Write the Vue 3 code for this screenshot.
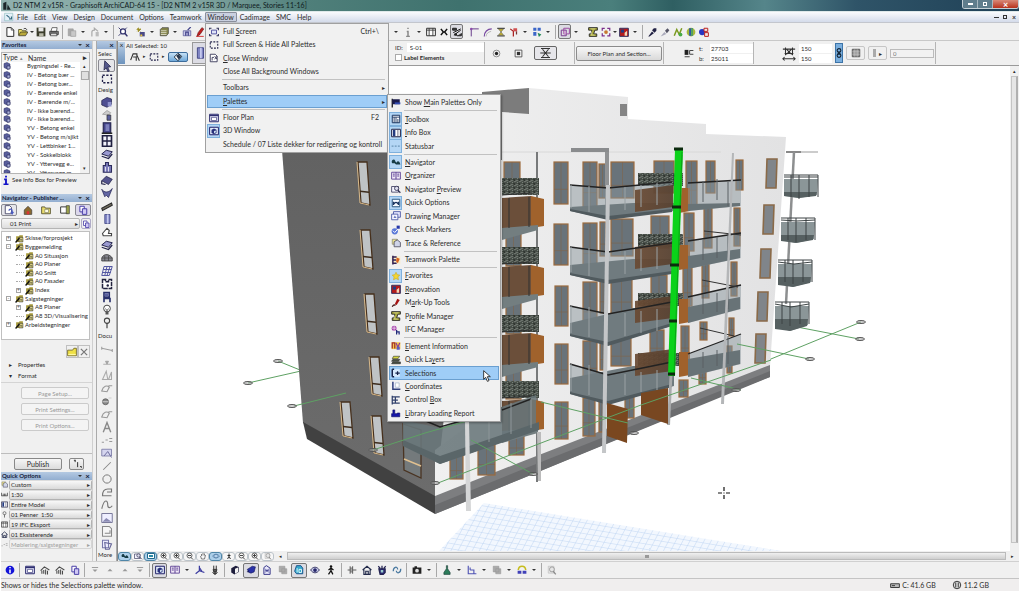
<script setup>
const icons = {
  page: '<path d="M3 1h7l4 4v10H3z" fill="#fff" stroke="#222" stroke-width="1.5"/><path d="M10 1v4h4" fill="none" stroke="#222"/>',
  open: '<path d="M1 13V4h5l1 2h6v3" fill="#f4e36a" stroke="#3a3a10" stroke-width="1.2"/><path d="M1 14l3-6h12l-4 6z" fill="#b9a93a" stroke="#222"/><path d="M9 3c3-2 5 0 5 2" fill="none" stroke="#222" stroke-width="1.3"/>',
  save: '<path d="M1 1h14v14H1z" fill="#3b3d2c"/><path d="M4 1h8v6H4z" fill="#e8e8e8"/><path d="M5 10h7v5H5z" fill="#b8b8a8"/>',
  print: '<path d="M5 1h8l-1 6H3z" fill="#fff" stroke="#222"/><path d="M1 7h14v5H1z" fill="#777" stroke="#222"/><path d="M3 10h9l1 4H2z" fill="#ddd" stroke="#222"/>',
  paste: '<path d="M2 3h8v11H2z" fill="#aaa" stroke="#999"/><path d="M6 6h8v9H6z" fill="#c8c8c8" stroke="#999"/>',
  undo: '<path d="M3 15V8q0-3 4-3V2l6 5" fill="none" stroke="#aaa" stroke-width="2"/><path d="M9 8h5v7H9z" fill="#bbb"/>',
  find: '<path d="M1 1l4 4M1 14l4-4M14 1l-3 3" stroke="#447" stroke-width="1.6"/><circle cx="8" cy="7" r="4" fill="#fff" stroke="#33336e" stroke-width="2"/><path d="M11 10l4 5" stroke="#33336e" stroke-width="2.4"/>',
  star: '<path d="M1 4h7M4 1v7M2 2l5 5M7 2L2 7" stroke="#9a8b20" stroke-width="1.4"/><path d="M6 8h8v7H6z" fill="#4a4a86"/><path d="M7 12h3v3H7z" fill="#e8c840"/>',
  layers: '<path d="M2 4l3-3h10v9l-3 4H2z" fill="#85854a" stroke="#333"/><path d="M3 6h9M3 9h9M3 12h9" stroke="#ecece0" stroke-width="1.2"/>',
  pick: '<path d="M2 6h12v8H2z" fill="#c9c9ea" stroke="#44448a"/><path d="M6 14V8h4v6M9 5l5-5" fill="none" stroke="#44448a" stroke-width="2"/>',
  pencil: '<path d="M3 15l2-6 6-8 3 2-6 9z" fill="#c22020" stroke="#611"/><path d="M2 15h12" stroke="#c22" stroke-width="1.4"/>',
  info: '<path d="M8 1v2M8 6v9M5 15h6M6 7h2" stroke="#888" stroke-width="2.4"/>',
  sheet: '<path d="M1 2h14v12H1z" fill="#fff" stroke="#333" stroke-width="1.6"/><path d="M1 5h14M5 2v12M11 2v12" stroke="#333" stroke-width="1.4"/>',
  cross: '<path d="M3 3l4 5-4 5M13 3L9 8l4 5M6 8h4" fill="none" stroke="#111" stroke-width="2.4"/>',
  snap: '<path d="M1 2h6v3H1zM2 9l12-6M3 13l11-8M8 14h7v-4" fill="#444" stroke="#222" stroke-width="1.6"/><path d="M4 10h4v4H4z" fill="#222"/>',
  corner: '<path d="M2 15V3h12" fill="none" stroke="#6a3f8c" stroke-width="1.6"/><circle cx="2" cy="3" r="2" fill="#8a4aa8"/>',
  curve: '<path d="M2 15C2 8 7 3 14 3" fill="none" stroke="#7748a0" stroke-width="1.8"/><path d="M5 15c0-4 3-7 8-8" fill="none" stroke="#999"/>',
  glass: '<path d="M2 2h12M2 14h12" stroke="#444" stroke-width="2"/><path d="M4 3h8l-4 5zM8 8l4 5H4z" fill="#c8b430" stroke="#665"/>',
  flag: '<path d="M2 3l5 4v8" fill="none" stroke="#a22" stroke-width="2"/><path d="M7 2h6v5H7z" fill="#d05050"/><path d="M12 7v5" stroke="#733" stroke-width="2"/>',
  blocks: '<path d="M2 1h5v5H2zM9 1h5v5H9zM2 8h5v6H2z" fill="#3b66c8"/><path d="M9 9l6 3-4 4z" fill="#285"/>',
  frame: '<path d="M2 5h8v9H2z" fill="none" stroke="#7b3d91" stroke-width="1.6"/><path d="M6 2h9v9H6z" fill="none" stroke="#9b4fa1" stroke-width="1.6"/><path d="M6 7h4v4H6z" fill="#cf9ad0"/>',
  profile: '<path d="M1 1h14v4h-4l-2 6h5v4H2v-4h3l1-6H1z" fill="#a9a93a" stroke="#222" stroke-width="1.4"/><path d="M4 3h8M6 7l-1 6h6" fill="none" stroke="#ececb0"/>',
  target: '<path d="M2 6V2h4M10 2h4v4M14 10v4h-4M6 14H2v-4" fill="none" stroke="#7a2f8a" stroke-width="2"/><circle cx="8" cy="8" r="3" fill="#c77830"/>',
  reno: '<path d="M1 2h14v13H1z" fill="#b51b1b" stroke="#303060" stroke-width="1.5"/><path d="M3 4h5v5H3z" fill="#223a80"/><path d="M9 9l4-3v8H9z" fill="#f3d7b8"/>',
  dropper: '<path d="M2 15l6-8 3 3-7 5zM8 5l3-3h4v4l-3 3z" fill="#222244"/>',
  syringe: '<path d="M1 15l6-7 3 3-6 3z" fill="#aab"/><path d="M8 6l4-4 3 3-4 5z" fill="#556"/>',
  wand: '<path d="M2 14L6 4l4 8 4-10" fill="none" stroke="#7a9a20" stroke-width="2.4"/><circle cx="12" cy="12" r="3" fill="#4a4"/>',
  globe: '<circle cx="8" cy="8" r="7" fill="#a8b83a"/><path d="M5 2h6v12H5z" fill="#2f54a8"/><path d="M8 2h3v12H8z" fill="#58a85a"/>',
  duo: '<circle cx="5" cy="8" r="5" fill="#2735c2"/><path d="M8 2h6v5H8zM9 9h6v6H9z" fill="#f4e6e0" stroke="#b22" stroke-width="1.6"/>',
  screen: '<path d="M1 4V2h3M12 2h3v3M15 11v3h-3M4 14H1v-3" fill="none" stroke="#33335c" stroke-width="1.8"/><path d="M4 5h8v6H4z" fill="#dfe4f8" stroke="#5a5aa5" stroke-width="1.6"/>',
  marquee: '<path d="M2 3h12v10H2z" fill="none" stroke="#22224a" stroke-width="1.7" stroke-dasharray="3 2"/>',
  closewin: '<path d="M2 2h8l3 3v9H2z" fill="#fff" stroke="#335" stroke-width="1.4"/><path d="M5 12V7h3M9 5l4 5M13 5l-4 5" fill="none" stroke="#335" stroke-width="1.4"/>',
  goto: '<path d="M2 1h7l3 3v10H2z" fill="#fff" stroke="#446" stroke-width="1.4"/><path d="M8 9c0-3 5-3 5 0v4M11 11l2 3 2-3" fill="none" stroke="#4a5ac0" stroke-width="2"/>',
  plan: '<path d="M1 2h14v12H1z" fill="#dfe0f4" stroke="#2e2e70" stroke-width="1.6"/><path d="M1 4h14" stroke="#2e2e70" stroke-width="2"/><path d="M4 7h8v5H4z" fill="#fff" stroke="#2e2e70"/>',
  cube: '<path d="M1 2h14v12H1z" fill="#e5eefa" stroke="#20206a" stroke-width="1.6"/><path d="M4 6l4-2 4 2v5l-4 2-4-2z" fill="#28307c"/><path d="M8 8l3-1v3l-3 2z" fill="#cde"/>',
  flagdark: '<path d="M2 1v14" stroke="#111" stroke-width="2"/><path d="M2 2h12v8H2z" fill="#1b1b4a"/><path d="M6 7h9v3H6z" fill="#334bb0"/>',
  toolbox: '<path d="M2 2h12v12H2z" fill="#fff" stroke="#1b3560" stroke-width="1.6"/><path d="M2 5h12M5 5v9M8 5v9M11 8v6" stroke="#1b3560" stroke-width="1.4"/>',
  infobox: '<path d="M1 2h14v12H1z" fill="#fff" stroke="#224" stroke-width="1.6"/><path d="M3 3h4v10H3z" fill="#223a80"/><path d="M11 3v10" stroke="#224"/>',
  status: '<path d="M1 8h3M6 8h3M11 8h3" stroke="#6c96b8" stroke-width="2"/>',
  navi: '<path d="M1 8c1-5 5-5 6-1l2 2c1-4 5-3 6 3H8l-2-2H2z" fill="#173c46"/>',
  organizer: '<path d="M1 2h14v11H1z" fill="#f2eaf8" stroke="#5a3f92" stroke-width="1.4"/><path d="M8 2v11M3 5h3M3 8h3M10 5h3M10 8h3" stroke="#5a3f92" stroke-width="1.6"/>',
  preview: '<path d="M1 4h11v9H1z" fill="#f4f4ff" stroke="#446" stroke-width="1.4"/><circle cx="9" cy="7" r="3.4" fill="#dde" stroke="#335" stroke-width="1.4"/><path d="M11 10l4 4" stroke="#335" stroke-width="2"/>',
  quick: '<path d="M2 2h12v12H2z" fill="#f6fbff" stroke="#23507a" stroke-width="1.5"/><path d="M4 6v5M12 6v5M4 10c3-4 5-4 8 0" fill="none" stroke="#1b3560" stroke-width="2"/>',
  drawing: '<path d="M4 1h11v9H4z" fill="#e6e8ff" stroke="#4a57a5" stroke-width="1.4"/><path d="M1 5h10v9H1z" fill="#f7f7ff" stroke="#4a57a5" stroke-width="1.4"/><path d="M4 11l2-4 3 4z" fill="#6a7ac0"/>',
  check: '<circle cx="6" cy="10" r="5" fill="#5a78d8"/><path d="M3 9l3 3 6-7" stroke="#fff" stroke-width="1.6" fill="none"/><path d="M9 1h5v5H9z" fill="#2737a8"/>',
  trace: '<path d="M2 2h8v8H2z" fill="#e9df8a" stroke="#776"/><path d="M5 6l5-3 5 4v7H5z" fill="#cfd4e8" stroke="#556" stroke-width="1.4"/>',
  team: '<path d="M1 2h14v12H1z" fill="#f9edc8"/><path d="M3 1v14M3 3h6M3 8h5M3 13h6" stroke="#332255" stroke-width="2.4"/><path d="M9 4l5 2-3 7-3-3z" fill="#d9631e"/>',
  fav: '<path d="M8 2l2 4 4 .5-3 3 1 4.500-4-2-4 2 1-4.500-3-3L6 6z" fill="#f3d534" stroke="#c8a820"/>',
  markup: '<path d="M6 10l4-9 4 2-5 8z" fill="#a51212"/><path d="M2 14c2-4 4-3 5-2" fill="none" stroke="#401010" stroke-width="2"/>',
  ifc: '<circle cx="5" cy="5" r="4" fill="#a23aa8"/><path d="M1 5h8M5 1v8" stroke="#fff"/><path d="M9 8v7M9 11h4v4" fill="none" stroke="#222a7a" stroke-width="2"/>',
  element: '<path d="M1 2h14v11H1z" fill="#f6c84a"/><path d="M2 2v10M2 3h4v9" stroke="#a03030" stroke-width="2" fill="none"/><path d="M8 3l3 7 3-7" stroke="#8a3a9a" stroke-width="2" fill="none"/><path d="M9 9h5v5H9z" fill="#5a5ac0"/>',
  qlayers: '<path d="M4 2h10l-3 4H2z" fill="#d7d83c" stroke="#333"/><path d="M3 7h11l-2 3H1zM3 11h12v3H1z" fill="#50584a" stroke="#222"/>',
  select: '<path d="M1 2h13v12H1z" fill="#d8eafc"/><path d="M2 2v12M2 2h3M2 14h3" stroke="#17244a" stroke-width="2.4"/><path d="M7 8h7M10.500 5v6" stroke="#17244a" stroke-width="2"/>',
  coord: '<path d="M2 2h11v10H2z" fill="#eef"/><path d="M3 1v12h12" fill="none" stroke="#30407c" stroke-width="2.4"/><path d="M7 3h6v7H7z" fill="#fff" stroke="#9ab"/>',
  control: '<path d="M2 1v14M2 3h12M2 8h9M2 13h12M7 3v10" stroke="#30406c" stroke-width="2"/>',
  library: '<path d="M1 14V9h2V3h3v6h4V8h4v6z" fill="#1717a8" stroke="#0c0c66"/>',
  house: '<path d="M2 8l6-6 6 6v7H2z" fill="#8a6a30" stroke="#333"/><path d="M6 15v-5h4v5z" fill="#d33"/>',
  folder: '<path d="M1 13V3h5l1 2h8v9H1z" fill="#e9dc6c" stroke="#4a4520" stroke-width="1.3"/><path d="M6 7h6v5H6z" fill="#fffde0" stroke="#776"/>',
  newfolder: '<path d="M1 14V5h8l2-3h4v12z" fill="#efe045" stroke="#6a6020" stroke-width="1.3"/><path d="M2 12h12" stroke="#fff9a0" stroke-width="2"/>',
  layout: '<path d="M1 3h12v10H1z" fill="#fff" stroke="#333" stroke-width="1.5"/><path d="M10 1h5v13h-5z" fill="#9aa04a" stroke="#333"/>',
  pub: '<path d="M3 2h7v9H3z" fill="#fff" stroke="#4a3fa8" stroke-width="1.6"/><path d="M7 6h7v9H7z" fill="#cfc8f4" stroke="#4a3fa8" stroke-width="1.6"/>',
  pubset: '<path d="M2 14V4h5l1-2h6v12z" fill="#a89a3c"/><path d="M7 6h7v8H7z" fill="#fff49a" stroke="#222"/><path d="M9 13V9h3v4" fill="none" stroke="#222"/><path d="M1 15l7-8" stroke="#111" stroke-width="2.4"/>',
  favitem: '<path d="M2 3l6-2 6 3v8l-4 3-8-4z" fill="#5a5f9c" stroke="#2c2f5e"/><path d="M8 8h6v6H8z" fill="#aeb4de" stroke="#2c2f5e" stroke-width="1.4"/>',
  arrow: '<path d="M5 1l8 8-4 .5 2 5-2 1-2-5-3 3z" fill="#55588c" stroke="#222248"/>',
  wall: '<path d="M1 6l7-4 6 2v7l-6 4-7-3z" fill="#4f4f92" stroke="#26264e"/><path d="M9 8h5v6H9z" fill="#8f93cc"/>',
  pillar: '<path d="M2 7l6-5 5 3-3 3z" fill="#ccc" stroke="#999"/><path d="M8 8h5v7H8z" fill="#5a5f9c" stroke="#333"/>',
  door: '<path d="M3 1h10v14H3z" fill="#45458a" stroke="#24244e" stroke-width="1.5"/><path d="M6 3h5v9H6z" fill="#7d80bc"/><path d="M1 15h14" stroke="#222" stroke-width="2"/>',
  window: '<path d="M2 1h12v14H2z" fill="#f2f2fa" stroke="#202040" stroke-width="2.2"/><path d="M8 1v14M2 8h12" stroke="#202040" stroke-width="1.8"/>',
  beam: '<path d="M1 11L14 4l1 3-13 7z" fill="#777264" stroke="#2a2a2a" stroke-width="1.4"/>',
  column: '<path d="M5 2h7v12H5z" fill="#8186c4" stroke="#3c4080"/><path d="M8 2h2v12H8z" fill="#c5c9ee"/>',
  slab: '<path d="M1 8l6-5 8 2-5 6z" fill="#9a9ad0" stroke="#22224a" stroke-width="1.3"/><path d="M1 11l9 3 5-6" fill="none" stroke="#22224a" stroke-width="1.6"/>',
  stair: '<path d="M3 15V6h3V2h4v4h4v9z" fill="#7a7ab8" stroke="#2c2c5c" stroke-width="1.4"/><path d="M6 8v6M10 8v6" stroke="#fff"/>',
  roof: '<path d="M1 9l6-6 8 4-5 7z" fill="#54548e" stroke="#222248"/><path d="M1 9v4l5 1" fill="none" stroke="#222248" stroke-width="1.6"/>',
  shell: '<path d="M1 3c3 5 10 5 14-1l-5 12-3-3-2 2z" fill="#6266a4" stroke="#2a2a58"/>',
  sky: '<path d="M2 10l6-7 3 3-1 4h4v3H3z" fill="#fff" stroke="#444" stroke-width="1.5"/>',
  mesh: '<path d="M4 2h11l-4 12H1zM3 6h11M2 10h11M8 2L5 14M12 2L8 14" fill="none" stroke="#5054a0" stroke-width="1.3"/>',
  morph: '<path d="M1 8c3-7 11-5 14 0v4H1z" fill="#85858e" stroke="#333"/><path d="M1 8h14M5 5v7M10 5v7" stroke="#444"/>',
  zone: '<path d="M2 2h4v3h4V2h4v12H2z" fill="#fff" stroke="#22223e" stroke-width="2" stroke-dasharray="6 1"/><circle cx="9" cy="10" r="1.6" fill="#22223e"/>',
  chair: '<path d="M4 2h7v6H4zM4 8v7M4 10h8v5" fill="none" stroke="#28306c" stroke-width="2.2"/><path d="M5 3h5v4H5z" fill="#5a60a0"/>',
  lamp: '<circle cx="8" cy="6" r="4.500" fill="#fff" stroke="#444" stroke-width="1.3"/><path d="M6 10h4v4H6z" fill="#555"/><path d="M6 6l2 3 2-3" fill="none" stroke="#333"/>',
  pin: '<circle cx="8" cy="5" r="3.500" fill="#eee" stroke="#444" stroke-width="1.4"/><path d="M8 8v7" stroke="#444" stroke-width="1.6"/>',
  dim: '<path d="M1 5v4M15 8v4M1 7l14 3" stroke="#999" stroke-width="1.3"/>',
  level: '<path d="M3 11h10M8 11L6 7h4z" stroke="#999" fill="#aaa"/>',
  angle: '<path d="M2 14L7 3l2 11zM10 14l4-10v10z" fill="none" stroke="#aaa" stroke-width="1.4"/>',
  radial: '<path d="M1 12c2-7 7-8 10-5L8 13zM10 5h5" fill="none" stroke="#999" stroke-width="1.5"/>',
  ball: '<circle cx="6" cy="9" r="4" fill="#888" stroke="#555"/><path d="M10 4h4M2 9h8" stroke="#ccc" stroke-width="1.6"/>',
  textA: '<path d="M3 15L8 2l5 13M5 10h6" fill="none" stroke="#888" stroke-width="1.8"/>',
  label: '<path d="M1 11h3M6 8h3M11 6h4M11 10h4" fill="none" stroke="#999" stroke-width="1.6"/>',
  fill: '<path d="M1 3h13v9H1z" fill="#d5d5ee" stroke="#6d6d9c"/><path d="M4 12l5-6 5 8" fill="none" stroke="#6d6d9c" stroke-width="1.3"/>',
  line: '<path d="M3 13L13 3" stroke="#888" stroke-width="1.4"/>',
  circle: '<circle cx="8" cy="8" r="5.500" fill="none" stroke="#777" stroke-width="1.3"/>',
  poly: '<path d="M14 13H2c0-5 2-9 7-9h5v4H8" fill="none" stroke="#777" stroke-width="1.5"/>',
  spline: '<path d="M1 13C5-3 9 3 9 8s4 4 6 1" fill="none" stroke="#777" stroke-width="1.5"/>',
  figure: '<path d="M1 2h14v12H1z" fill="#eef" stroke="#779" stroke-width="1.3"/><path d="M2 13l5-5 7 5z" fill="#8b8bb4"/>',
  dwg: '<path d="M2 2h9l3 3v10H2z" fill="#f6f6f6" stroke="#888" stroke-width="1.4"/><path d="M5 11h7V7" fill="none" stroke="#888" stroke-width="1.4"/>',
  detail: '<path d="M2 3h8v10H2z" fill="#eef" stroke="#77a" stroke-width="1.4"/><path d="M5 6l9 2-3 7H6z" fill="none" stroke="#669" stroke-width="1.5"/>',
  i: '<circle cx="8" cy="8" r="7" fill="#1414d8"/><path d="M8 3v2M8 7v6" stroke="#fff" stroke-width="2.4"/>',
  roofs: '<path d="M1 9l6-6 8 5M3 9v5M6 8v6M9 7v8M12 9v6" fill="none" stroke="#4a4a4a" stroke-width="1.7"/>',
  down: '<path d="M3 4h10" stroke="#999" stroke-width="1.5"/><path d="M4 7h8l-4 4z" fill="#999"/>',
  up: '<path d="M4 10h8L8 6z" fill="#999"/>',
  axes: '<path d="M7 1v8l-6 5M7 9l8 3M7 4l4 6" fill="none" stroke="#3c3ca0" stroke-width="2"/>',
  plug: '<path d="M6 1v6M10 1v6M5 7h6l-1 4H6zM8 11v4M4 12l4 3 4-3" fill="#555" stroke="#333" stroke-width="1.6"/>',
  box: '<path d="M2 5l7-4 5 2v8l-7 4-5-3z" fill="#1d1d3c"/><path d="M8 6l5-2v7l-5 3z" fill="#f3f3f3"/>',
  shade: '<path d="M2 7l8-5 5 1-2 8-5 2-3-1z" fill="#2a32a8" stroke="#151a60"/><path d="M1 11l4-3v4z" fill="#151a60"/>',
  hall: '<path d="M3 15V4l4-3 6 4v10z" fill="#e8e8fa" stroke="#3a3a8a" stroke-width="1.6"/><path d="M5 6l6 6M11 6l-6 6M5 9h6" stroke="#3a3a8a" stroke-width="1.3"/>',
  cyan: '<path d="M4 1h7l3 4v9H4L1 10z" fill="#35a9cc" stroke="#134c88" stroke-width="1.4"/><path d="M5 5v7M8 7h4v5H8z" fill="none" stroke="#eaffff" stroke-width="1.4"/>',
  eye: '<path d="M1 8c4-6 10-6 14 0-4 6-10 6-14 0z" fill="#cfd2ec" stroke="#2a2a5c" stroke-width="1.4"/><circle cx="8" cy="8" r="3" fill="#27276a"/>',
  walk: '<circle cx="8" cy="2.500" r="2" fill="#111"/><path d="M8 4v5l3 6M8 9l-4 6M4 8l4-3 4 3" fill="none" stroke="#111" stroke-width="2"/>',
  section: '<path d="M1 8h14M5 2v12M9 2v12M5 5h4M5 11h4" stroke="#555" stroke-width="1.5"/>',
  home: '<path d="M1 8l7-6 7 6M3 7v8h10V7M6 15v-5h4v5" fill="none" stroke="#222a4a" stroke-width="1.8"/>',
  paw: '<path d="M2 2l3 3M8 1v4M14 2l-3 3M3 6h10v6l-3 3H5z" fill="#2a2a78" stroke="#222250" stroke-width="2"/><path d="M6 8h4v4H6z" fill="#9cc"/>',
  refresh: '<path d="M2 10C2 2 9 2 9 7M14 6c0 8-7 8-7 3" fill="none" stroke="#4878a0" stroke-width="2"/>',
  camera: '<path d="M1 4h14v10H1z" fill="#222"/><path d="M4 2h4v3H4z" fill="#222"/><circle cx="8" cy="9" r="3" fill="#ddd"/>',
  bottle: '<path d="M7 1h2v5l4 6v3H3v-3l4-6z" fill="#2c7c5a" stroke="#1b3f38"/>',
  chart: '<path d="M2 1v13h13M5 4v4M5 8h6v5" fill="none" stroke="#5054b4" stroke-width="1.8"/>',
  grey: '<path d="M2 2h9v9H2zM6 6h8v8H6z" fill="#aaa" stroke="#999"/>',
  arch: '<path d="M2 8c1-8 11-8 12 0" fill="none" stroke="#c6bc1c" stroke-width="2.500"/><path d="M1 9h6v5H1zM9 9h6v5H9z" fill="#4040b8"/>',
  zoomg: '<path d="M2 2h9v11H2z" fill="#e5e5e5" stroke="#bbb"/><circle cx="8" cy="7" r="4" fill="none" stroke="#999" stroke-width="1.4"/><path d="M10 10l4 5" stroke="#888" stroke-width="2"/>',
  mag: '<circle cx="7" cy="7" r="5" fill="#f8f8f8" stroke="#333" stroke-width="1.500"/><path d="M10 11l4 4M7 4v6M4 7h6" stroke="#333" stroke-width="1.800"/>',
  minus: '<circle cx="7" cy="7" r="5" fill="#f8f8f8" stroke="#333" stroke-width="1.500"/><path d="M10 11l4 4M4 7h6" stroke="#333" stroke-width="1.800"/>',
  hand: '<path d="M3 8l2 6h6l2-8M5 8V4M8 7V2M11 7V3" fill="none" stroke="#555" stroke-width="1.5"/>',
  orbit: '<circle cx="8" cy="8" r="4" fill="#b8d4ee" stroke="#48739c"/><path d="M1 8c3 5 11 5 14 0M1 8c3-4 11-4 14 0" fill="none" stroke="#48739c" stroke-width="1.3"/>',
  fit: '<path d="M1 3h14v10H1z" fill="#fff" stroke="#206a8c" stroke-width="2"/><path d="M4 6h8v4H4z" fill="#2b8aa8"/>',
  person: '<path d="M8 3v6l3 5M8 9l-3 5M5 7h6" fill="none" stroke="#222" stroke-width="1.8"/>',
  brick: '<path d="M1 13L5 3h6v4M5 8h5v6M11 5l4 9" fill="none" stroke="#333" stroke-width="1.8"/>',
  turn: '<path d="M8 2l6 5-6 7-6-6z" fill="#fff" stroke="#234" stroke-width="1.6"/><path d="M5 6l4-3 4 5-4 4z" fill="#2a3a50"/>',
  hourglass: '<path d="M2 2h12M2 14h12M4 3l8 10M12 3L4 13M1 8h14" stroke="#333" stroke-width="1.4"/>',
  radio: '<circle cx="8" cy="8" r="6" fill="#eee" stroke="#777" stroke-width="1.400"/><circle cx="8" cy="8" r="3" fill="#222"/>',
  hatch: '<path d="M2 2h12v12H2z" fill="#999" stroke="#555" stroke-width="1.500"/><path d="M6 2v12M10 2v12M2 6h12M2 10h12" stroke="#ccc" stroke-width=".8"/>',
  filled: '<path d="M2 2h12v12H2z" fill="#fff" stroke="#444" stroke-width="1.500"/><path d="M5 5h6v6H5z" fill="#333"/>',
  size: '<path d="M1 3h14M3 8h10M4 1v9M12 1v9M5 3l6 6M11 3L5 9M1 14h14M3 12l-2 2 2 2M13 12l2 2-2 2" fill="none" stroke="#333" stroke-width="1.2"/>',
  offset: '<path d="M1 3h6v8H1z" fill="#222"/><path d="M9 10V4h6M9 10h6M1 14h8" fill="none" stroke="#444" stroke-width="1.6"/>',
  chain: '<circle cx="8" cy="4" r="3" fill="none" stroke="#123" stroke-width="1.8"/><circle cx="8" cy="12" r="3" fill="none" stroke="#123" stroke-width="1.8"/><path d="M8 5v6" stroke="#123" stroke-width="2"/>',
  x: '<path d="M3 3l10 10M13 3L3 13" stroke="#777" stroke-width="2"/>',
  ruler: '<path d="M1 4v7h14V4M5 6v5M8 6v5M11 6v5" fill="none" stroke="#333" stroke-width="1.6"/>',
}

const menus = ['File', 'Edit', 'View', 'Design', 'Document', 'Options', 'Teamwork', 'Window', 'Cadimage', 'SMC', 'Help']

const parse = (text) => text.split(' ').map((part) => {
  if (part === '|') return { kind: 'sep' }
  if (part === '_') return { kind: 'space' }
  if (part === 'v') return { kind: 'caret' }
  if (part === '.') return { kind: 'caret small' }
  return { kind: 'tool', on: part.endsWith('!'), icon: part.replace('!', '') }
})
const topLeft = parse('page open . save print | paste v undo v | find _ star v layers v pick pencil')
const topRight = parse('v info v sheet cross snap! _ corner curve glass flag v blocks v | frame! v _ profile target . reno v | dropper syringe wand globe duo')
const bottomA = parse('i | plan roofs roofs pub | down up up down | cube! organizer v axes plug |')
const bottomB = parse('box shade! hall grey cyan! eye walk')
const bottomC = parse('| section home paw refresh | camera v | bottle v chart v grey v arch v | zoomg')
const viewTools = ['navi!', 'preview', 'fit!', 'mag', 'mag', 'minus', 'hand', 'orbit!', 'person', 'minus', 'mag', 'zoomg'].map((n) => ({ icon: n.replace('!', ''), on: n.endsWith('!') }))

const favorites = ['Bygningsdel - Re...', 'IV - Betong bær ...', 'IV - Betong bær...', 'IV - Bærende enkel', 'IV - Bærende m/...', 'IV - Ikke bærend...', 'IV - Ikke bærend...', 'YV - Betong enkel', 'YV - Betong m/sjikt', 'YV - Lettbinker 1...', 'YV - Sokkelblokk', 'YV - Yttervegg e...', 'YV - Yttervegg m...']

const tree = [
  [0, '+', 'Skisse/forprosjekt'], [0, '-', 'Byggemelding'], [1, '', 'A0 Situasjon'], [1, '', 'A0 Planer'], [1, '', 'A0 Snitt'],
  [1, '', 'A0 Fasader'], [1, '+', 'Index'], [0, '-', 'Salgstegninger'], [1, '+', 'A8 Planer'], [1, '', 'A8 3D/Visualisering'], [0, '+', 'Arbeidstegninger'],
]

const quick = [['trace', 'Custom'], ['ruler', '1:30'], ['infobox', 'Entire Model'], ['pin', '01 Penner  1:50'], ['sheet', '19 IFC Eksport'], ['home', '01 Eksisterende'], ['label', 'Møblering/salgstegninger']]

const designTools = ['wall', 'pillar', 'door', 'window', 'slab', 'stair', 'roof', 'shell', 'beam', 'column', 'sky', 'slab', 'morph', 'mesh', 'zone', 'chair', 'lamp', 'pin']
const docTools = ['dim', 'level', 'angle', 'radial', 'ball', 'radial', 'textA', 'label', 'fill', 'line', 'circle', 'poly', 'spline', 'figure', 'dwg', 'detail']

const windowMenu = [
  { icon: 'screen', text: ['Full ', 'S', 'creen'], key: 'Ctrl+\\' },
  { icon: 'marquee', text: ['Full Screen & Hide All Palettes', '', ''] },
  { icon: 'closewin', text: ['', 'C', 'lose Window'] },
  { text: ['Close All Background Windows', '', ''] },
  { sep: true },
  { text: ['Toolbars', '', ''], sub: true },
  { text: ['', 'P', 'alettes'], sub: true, hot: true },
  { sep: true },
  { icon: 'plan', text: ['Floor Plan', '', ''], key: 'F2' },
  { icon: 'cube', text: ['3D Window', '', ''], on: true },
  { text: ['Schedule / 07 Liste dekker for redigering og kontroll', '', ''] },
]
const paletteMenu = [
  { icon: 'flagdark', text: ['Show ', 'M', 'ain Palettes Only'] },
  { sep: true },
  { icon: 'toolbox', text: ['', 'T', 'oolbox'], on: true },
  { icon: 'infobox', text: ['', 'I', 'nfo Box'], on: true },
  { icon: 'status', text: ['Statusbar', '', ''], on: true },
  { sep: true },
  { icon: 'navi', text: ['', 'N', 'avigator'], on: true },
  { icon: 'organizer', text: ['', 'O', 'rganizer'] },
  { icon: 'preview', text: ['Navigator ', 'P', 'review'] },
  { icon: 'quick', text: ['Quick Options', '', ''], on: true },
  { icon: 'drawing', text: ['Drawing Manager', '', ''] },
  { icon: 'check', text: ['Check Markers', '', ''] },
  { icon: 'trace', text: ['Trace & Reference', '', ''] },
  { sep: true },
  { icon: 'team', text: ['Teamwork Palette', '', ''] },
  { sep: true },
  { icon: 'fav', text: ['', 'F', 'avorites'], on: true },
  { icon: 'reno', text: ['', 'R', 'enovation'] },
  { icon: 'markup', text: ['M', 'a', 'rk-Up Tools'] },
  { icon: 'profile', text: ['P', 'r', 'ofile Manager'] },
  { icon: 'ifc', text: ['IFC Manager', '', ''] },
  { sep: true },
  { icon: 'element', text: ['', 'E', 'lement Information'] },
  { icon: 'qlayers', text: ['Quick La', 'y', 'ers'] },
  { icon: 'select', text: ['Selections', '', ''], hot: true },
  { icon: 'coord', text: ['', 'C', 'oordinates'] },
  { icon: 'control', text: ['Control ', 'B', 'ox'] },
  { icon: 'library', text: ['', 'L', 'ibrary Loading Report'] },
]

const sideWindows = [[357, 162, 43], [360, 230, 39], [364, 294, 40], [369, 357, 39], [340, 402, 36], [371, 416, 39]]
const frontWindows = [
  [503, 162, 16, 30], [505, 230, 15, 36], [505, 300, 15, 34], [505, 367, 15, 32],
  [553, 162, 14, 42], [553, 224, 14, 41], [554, 286, 13, 40], [554, 344, 13, 40], [554, 402, 13, 37],
  [582, 162, 14, 47], [582, 223, 14, 47], [582, 282, 14, 46], [582, 341, 14, 42], [582, 398, 12, 38],
  [598, 164, 7, 34], [599, 222, 6, 34], [599, 281, 6, 32], [599, 340, 6, 30],
  [610, 162, 23, 36], [610, 219, 22, 37], [610, 278, 21, 37], [610, 338, 20, 28],
  [653, 161, 20, 32], [650, 216, 18, 32], [650, 275, 16, 30], [649, 330, 14, 28],
  [685, 161, 11, 45], [683, 213, 10, 38], [682, 268, 9, 38], [680, 326, 8, 34], [678, 380, 9, 17],
  [705, 161, 9, 32], [703, 208, 8, 40], [701, 264, 7, 34], [699, 322, 7, 18], [698, 366, 7, 18],
  [735, 160, 7, 30], [733, 208, 6, 38], [730, 262, 6, 34], [728, 318, 5, 18], [726, 346, 5, 27],
  [598, 395, 6, 37], [624, 392, 9, 26],
  [449, 455, 13, 24], [477, 445, 17, 30], [508, 435, 15, 20],
]
const endWindows = [[766, 159], [763, 205], [760, 249], [757, 292], [755, 334]]
const farLevels = [198, 267, 335, 401]
const midLevels = [
  { l: 185, c: 188, r: 182, sl: 211, sc: 219, sr: 211, d: 6 },
  { l: 247, c: 252, r: 243, sl: 275, sc: 283, sr: 273, d: 12 },
  { l: 306, c: 314, r: 302, sl: 336, sc: 345, sr: 325, d: 15 },
  { l: 364, c: 375, r: 362, sl: 394, sc: 404, sr: 386, d: 18 },
]
const panels = [188, 245, 299, 352]
const rightLevels = [[183, 180, 211, 206, 7], [241, 233, 269, 258, 13], [297, 285, 323, 309, 16], [354, 334, 377, 364, 18]]
const outerLevels = [[783, 175], [780, 218], [777, 260], [774, 302]]
const grounds = [[247, 383], [277, 361], [291, 406], [372, 450], [434, 483], [532, 474], [633, 433], [735, 390], [809, 359], [859, 339], [860, 322]]
</script>

<template>
  <div class="app">
    <header class="title">
      <svg class="ic" viewBox="0 0 16 16"><path d="M2 14V3l5-2v13zM8 14l1-9 5 9z" fill="#1c2629" /></svg>
      <h1>D2 NTM 2 v15R - Graphisoft ArchiCAD-64 15 - [D2 NTM 2 v15R 3D / Marquee, Stories 11-16]</h1>
      <div class="winbtns">
        <button aria-label="Minimize"><i class="bar"></i></button>
        <button aria-label="Restore"><i class="sq"></i></button>
        <button class="close" aria-label="Close">×</button>
      </div>
    </header>

    <nav class="menubar">
      <svg class="ic" viewBox="0 0 16 16"><path d="M1 2h13v12H1z" fill="#e4f0f8" stroke="#8bb" /><path d="M4 5l5 4M8 11h4V7" stroke="#356a80" stroke-width="2" fill="none" /></svg>
      <button v-for="m in menus" :key="m" :class="{ open: m === 'Window' }">{{ m }}</button>
      <div class="childbtns">
        <button aria-label="Minimize document"><i class="bar"></i></button>
        <button aria-label="Restore document"><i class="sq"></i></button>
        <button aria-label="Close document">×</button>
      </div>
    </nav>

    <div class="toolbar top">
      <div class="tools first">
        <template v-for="(t, n) in topLeft" :key="n">
          <button v-if="t.kind === 'tool'" class="tool" :aria-label="t.icon"><svg class="ic" viewBox="0 0 16 16" v-html="icons[t.icon]" /></button>
          <i v-else :class="t.kind"></i>
        </template>
      </div>
      <div class="tools">
        <template v-for="(t, n) in topRight" :key="n">
          <button v-if="t.kind === 'tool'" class="tool" :class="{ on: t.on }" :aria-label="t.icon"><svg class="ic" viewBox="0 0 16 16" v-html="icons[t.icon]" /></button>
          <i v-else :class="t.kind"></i>
        </template>
      </div>
    </div>

    <main class="main">
      <aside class="palettes">
        <section class="favorites">
          <h2>Favorites<span><i class="caret"></i>×</span></h2>
          <div class="favlist">
            <div class="favscroll">
              <table>
                <thead><tr><th>Type <small>▴</small></th><th>Name</th></tr></thead>
                <tbody>
                  <tr v-for="(f, n) in favorites" :key="n">
                    <td><svg class="ic" viewBox="0 0 16 16" v-html="icons.favitem" /></td>
                    <td>{{ f }}</td>
                  </tr>
                </tbody>
              </table>
            </div>
            <div class="vscroll"><b>▸</b><span>▴</span><i></i><em>▾</em></div>
          </div>
          <p class="hint"><svg class="ic" viewBox="0 0 16 16"><path d="M8 1v3M5 7h3v8M4 15h8" stroke="#1414c8" stroke-width="3" fill="none" /></svg>See Info Box for Preview</p>
        </section>

        <section class="navigator">
          <h2>Navigator - Publisher ...<span><i class="caret"></i>×</span></h2>
          <div class="navtabs">
            <button class="boxed" aria-label="Choose project"><svg class="ic" viewBox="0 0 16 16" v-html="icons.goto" /></button>
            <button aria-label="Project map"><svg class="ic" viewBox="0 0 16 16" v-html="icons.house" /></button>
            <button aria-label="View map"><svg class="ic" viewBox="0 0 16 16" v-html="icons.folder" /></button>
            <button aria-label="Layout book"><svg class="ic" viewBox="0 0 16 16" v-html="icons.layout" /></button>
            <button class="boxed on" aria-label="Publisher sets"><svg class="ic" viewBox="0 0 16 16" v-html="icons.pub" /></button>
          </div>
          <div class="pubrow">
            <button class="drop">01 Print<i>▸</i></button>
            <button class="mini" aria-label="Level up"><svg class="ic" viewBox="0 0 16 16" v-html="icons.pub" /></button>
          </div>
          <ul class="tree">
            <li v-for="(t, n) in tree" :key="n" :class="{ child: t[0] }">
              <i :class="{ knob: t[1] }">{{ t[1] }}</i>
              <svg class="ic" viewBox="0 0 16 16" v-html="icons.pubset" />{{ t[2] }}
            </li>
          </ul>
          <div class="foldrow">
            <button aria-label="New folder"><svg class="ic" viewBox="0 0 16 16" v-html="icons.newfolder" /></button>
            <button aria-label="Delete"><svg class="ic" viewBox="0 0 16 16" v-html="icons.x" /></button>
          </div>
          <button class="fold"><i>▸</i>Properties</button>
          <button class="fold"><i>▾</i>Format</button>
          <div class="pagebtns">
            <button disabled>Page Setup...</button>
            <button disabled>Print Settings...</button>
            <button disabled>Print Options...</button>
          </div>
          <div class="pubbtns">
            <button>Publish</button>
            <button class="tiny" aria-label="Publish scope"><svg class="ic" viewBox="0 0 16 16"><path d="M3 2h3M5 2v3M9 5v8M13 12h2v2" fill="none" stroke="#333" stroke-width="1.6" /></svg></button>
          </div>
        </section>

        <section class="quick">
          <h2>Quick Options<span><i class="caret"></i>×</span></h2>
          <div class="quicklist">
            <div v-for="(q, n) in quick" :key="q[1]" class="qrow">
              <svg class="ic" viewBox="0 0 16 16" v-html="icons[q[0]]" />
              <button :disabled="n === 6">{{ q[1] }}<i>▸</i></button>
            </div>
          </div>
        </section>
      </aside>

      <aside class="toolbox">
        <h2>×</h2>
        <p>Selec</p>
        <button class="boxed" aria-label="Arrow"><svg class="ic" viewBox="0 0 16 16" v-html="icons.arrow" /></button>
        <button aria-label="Marquee"><svg class="ic" viewBox="0 0 16 16" v-html="icons.marquee" /></button>
        <p>Desig</p>
        <button v-for="(t, n) in designTools" :key="n" :aria-label="t"><svg class="ic" viewBox="0 0 16 16" v-html="icons[t]" /></button>
        <p class="tall">Docu</p>
        <button v-for="(t, n) in docTools" :key="n" :aria-label="t"><svg class="ic" viewBox="0 0 16 16" v-html="icons[t]" /></button>
        <p>More</p>
      </aside>

      <div class="work">
        <div class="infobox">
          <div class="grip">×</div>
          <div class="sel">
            <p>All Selected: 10</p>
            <div>
              <button aria-label="Default settings"><svg class="ic" viewBox="0 0 16 16" v-html="icons.brick" /></button>
              <i>▸</i>
              <button aria-label="Selection marquee"><svg class="ic" viewBox="0 0 16 16" v-html="icons.marquee" /></button>
              <i>▸</i>
              <button class="blue" aria-label="Geometry"><svg class="ic" viewBox="0 0 16 16" v-html="icons.turn" /></button>
            </div>
          </div>
          <button class="object" aria-label="Column settings"><svg class="ic" viewBox="0 0 16 16" v-html="icons.column" /></button>
          <div class="ident">
            <label>ID: <input value="S-01" /></label>
            <label class="chk"><input type="checkbox" />Label Elements</label>
          </div>
          <div class="modes">
            <button aria-label="Simple"><svg class="ic" viewBox="0 0 16 16" v-html="icons.radio" /></button>
            <button aria-label="Filled"><svg class="ic" viewBox="0 0 16 16" v-html="icons.filled" /></button>
            <button class="boxed" aria-label="Crossed"><svg class="ic" viewBox="0 0 16 16" v-html="icons.hourglass" /></button>
          </div>
          <div class="fps"><button>Floor Plan and Section...</button></div>
          <div class="heights">
            <svg class="ic" viewBox="0 0 16 16" v-html="icons.offset" />
            <div><label>t: <input value="27703" /></label><label>b: <input value="25011" /></label></div>
          </div>
          <div class="dims">
            <svg class="ic big" viewBox="0 0 16 16" v-html="icons.size" />
            <div><input aria-label="Width" value="150" /><input aria-label="Depth" value="150" /></div>
            <button class="link" aria-label="Keep proportions"><svg class="ic" viewBox="0 0 16 16" v-html="icons.chain" /></button>
            <button class="pen" aria-label="Profile"><svg class="ic" viewBox="0 0 16 16" v-html="icons.hatch" /></button>
            <button class="pen" aria-label="Slant"><b></b><i>▸</i></button>
            <input class="zero" aria-label="Angle" value="0" disabled />
          </div>
        </div>

        <div class="view">
          <svg class="scene" viewBox="117 66 892 485" preserveAspectRatio="xMinYMin slice" role="img" aria-label="3D view of the apartment building">
            <defs>
              <pattern id="grid" width="7" height="5" patternUnits="userSpaceOnUse" patternTransform="skewX(-20) rotate(9)">
                <path d="M0 0h7v5H0z" fill="#f2f7fe" />
                <path d="M0 0h7M0 0v5" stroke="#bcd4f2" stroke-width="1" fill="none" />
              </pattern>
              <pattern id="leaf" width="5" height="4" patternUnits="userSpaceOnUse">
                <path d="M0 0h5v4H0z" fill="#474e48" />
                <path d="M0 1l2-1M3 2l2-1M1 3l1-1" stroke="#8d958c" stroke-width=".7" fill="none" />
                <path d="M3 0l1 1M4 3l-2 1" stroke="#262b26" stroke-width=".8" fill="none" />
              </pattern>
              <linearGradient id="front" x1="0" x2="1"><stop offset="0" stop-color="#f0f0f0" /><stop offset="1" stop-color="#e2e2e3" /></linearGradient>
              <linearGradient id="side" x1="0" y1="0" x2="0" y2="1"><stop offset="0" stop-color="#626262" /><stop offset="1" stop-color="#6c6c6c" /></linearGradient>
              <linearGradient id="wood" x1="0" x2="1"><stop offset="0" stop-color="#6a4a33" /><stop offset="1" stop-color="#57402f" /></linearGradient>
            </defs>

            <path d="M438 551L483 503L520 509L780 551z" fill="url(#grid)" />
            <path d="M247 383L300 371M277 361L299 370" class="gl" />
            <path d="M796 327L858 339M765 361L860 322" class="gl" />

            <!-- walls and plinth -->
            <path d="M281 150H388L445 400L434 497L302 423z" fill="url(#side)" />
            <path d="M302 422L434 496V514L306 439z" fill="#414141" />
            <path d="M481 92L528 88V160H481z" fill="#7c7c7c" />
            <path d="M434 450L501 400V112L528 114V88L627 97V119L705 124V134L785 137L769 366L520 463L434 496z" fill="url(#front)" />
            <path d="M619 104h7v12h-7z" fill="#858585" />
            <path d="M501 152H720" stroke="#d8d8d8" fill="none" />
            <path d="M434 496L520 462L769 365V377L740 388L520 479L434 514z" fill="#7d7e80" />
            <path d="M434 505L520 470L769 371V377L520 479L434 514z" fill="#6b6c6e" />

            <g v-for="w in sideWindows" :key="w[0] + '-' + w[1]">
              <path :d="`M${w[0]} ${w[1]}l9 0l3 ${w[2]}l-9 -2z`" fill="#bfc3c5" stroke="#46301d" stroke-width="1.300" />
              <path :d="`M${w[0] - 1} ${w[1]}l3 ${w[2] - 2}l9 2`" stroke="#d8b98a" stroke-width="1" fill="none" />
              <path :d="`M${w[0] + 2} ${w[1] + w[2] * .68}l9 1`" stroke="#3d2c1c" stroke-width="1.500" />
            </g>
            <path d="M402 424l18 6v48l-17 -8z" fill="#747a7c" stroke="#4a3422" stroke-width="1.300" />
            <path d="M403 459l17 7" stroke="#e0c090" stroke-width="1.500" />

            <g v-for="w in frontWindows" :key="w[0] + '-' + w[1]">
              <rect :x="w[0]" :y="w[1]" :width="w[2]" :height="w[3]" fill="#69737a" stroke="#9b6a3c" stroke-width="1.200" />
              <path :d="`M${w[0] + w[2] / 2} ${w[1]}v${w[3]}M${w[0]} ${w[1] + w[3] * .65}h${w[2]}`" stroke="#7d6650" stroke-width=".7" />
            </g>
            <path v-for="w in endWindows" :key="w[1]" :d="`M${w[0]} ${w[1]}h10l-1 29h-10z`" fill="#80858a" stroke="#8a6a48" stroke-width="1.600" />

            <!-- balconies at the far end -->
            <path d="M785 152H817" stroke="#ccc" stroke-width="2" /><path d="M785 152H800" stroke="#888" stroke-width="2" />
            <path d="M793 152L785 304" stroke="#8d8f90" stroke-width="2.500" />
            <g v-for="(b, n) in outerLevels" :key="b[1]">
              <path :d="`M${b[0]} ${b[1] + 4}h34l-1 ${16 + n}l-18 ${3 + n}l-15 -${2 + n}z`" fill="#8b9698" />
              <path :d="`M${b[0]} ${b[1] + 17}h33l-1 ${4 + n}l-17 ${2 + n}l-15 -2z`" fill="#566061" />
              <path :d="`M${b[0]} ${b[1]}h34v22M${b[0] + 7} ${b[1]}v22M${b[0] + 15} ${b[1]}v24M${b[0] + 25} ${b[1]}v22M${b[0]} ${b[1] + 2}l16 ${n}l18 -${n}`" fill="none" stroke="#3c4344" stroke-width="1" />
            </g>

            <!-- canopy -->
            <path d="M570 148h38v4h-38z" fill="#8a8c8e" /><path d="M604 152h4v60h-4z" fill="#909294" />
            <path d="M535 152h2v330h-2z" fill="#77797a" />

            <!-- left stack -->
            <g v-for="y in farLevels" :key="y">
              <path :d="`M501 ${y - 20}h37v17h-37z`" fill="url(#leaf)" />
              <path :d="`M501 ${y}L530 ${y - 2}v30l-29 4z`" fill="#6b4f3a" />
              <path :d="`M530 ${y - 2}l13 3v27l-13 2z`" fill="#a0622c" />
              <path :d="`M501 ${y + 30}l36 -3v5l-36 10z`" fill="#737e80" />
              <path :d="`M501 ${y - 3}l30 -2M508 ${y}v30M528 ${y - 1}v30`" stroke="#2f3030" stroke-width="1" fill="none" />
            </g>

            <!-- middle stack -->
            <g v-for="(m, n) in midLevels" :key="m.l">
              <rect x="637" :y="m.r - 9" width="45" height="13" fill="url(#leaf)" />
              <path :d="`M569 ${m.l}L607 ${m.c}L671 ${m.r}V${m.sr - 4}L607 ${m.sc - 4}L569 ${m.sl - 4}z`" fill="#8a969c" opacity=".5" />
              <path :d="`M569 ${m.sl - m.d + 2}L632 ${m.sr - m.d - 2}L673 ${m.sr - m.d - 2}V${m.sr}L607 ${m.sc}L569 ${m.sl}z`" fill="#707b7f" />
              <path :d="`M634 ${panels[n] + 2}L672 ${panels[n] - 3}v22l-38 5z`" fill="url(#wood)" opacity=".92" />
              <path :d="`M569 ${m.sl - 2}L607 ${m.sc - 3}L671 ${m.sr - 2}V${m.sr + 1}L607 ${m.sc + 1}L569 ${m.sl}z`" fill="#505a5e" />
              <path :d="`M569 ${m.l}L607 ${m.c}L671 ${m.r}`" fill="none" stroke="#222" stroke-width="1.400" />
              <path :d="`M570 ${m.l}V${m.sl - 3}M588 ${m.l + 1}V${m.sl + 1}M624 ${m.c - 1}V${m.sc - 9}M640 ${m.c - 3}V${m.sc - 12}M656 ${m.c - 5}V${m.sc - 14}`" stroke="#9aa2a5" stroke-width="1" />
              <path :d="`M678 ${panels[n]}h11v23l-11 2z`" fill="#a0612c" />
            </g>

            <!-- right stack -->
            <g v-for="r in rightLevels" :key="r[0]">
              <path :d="`M687 ${r[0]}L740 ${r[1]}V${r[3]}L687 ${r[2]}z`" fill="#8a969c" opacity=".5" />
              <path :d="`M687 ${r[2] - r[4]}L739 ${r[3] - r[4] + 4}V${r[3]}L687 ${r[2]}z`" fill="#687377" />
              <path :d="`M687 ${r[0]}L740 ${r[1]}`" stroke="#222" stroke-width="1.300" />
              <path :d="`M702 ${r[0] - 2}V${r[2] - 9}M716 ${r[0] - 4}V${r[2] - 11}M727 ${r[1] + 2}V${r[3]}`" stroke="#5a6164" stroke-width="1" />
            </g>
            <path d="M703 231L740 235M701 280L737 287M699 328L733 336" stroke="#333" stroke-width="1" />
            <path d="M605 185h4l-4 268h-4z" fill="#c4c6c8" />
            <path d="M680 155h2L669 425h-3z" fill="#a9abac" /><path d="M731 153h2L723 404h-3z" fill="#b4b6b8" />

            <!-- ground level -->
            <path d="M606 403l21 6l-1 34l-20 -7z" fill="#7a471f" /><path d="M640 393l27 -5v36l-27 -9z" fill="#784721" />
            <path d="M402 420L439 428L535 395V430L439 464L402 446z" fill="#69767a" opacity=".88" />
            <path d="M402 440L439 456L538 422V430L439 464L402 446z" fill="#5a6669" />
            <path d="M420 419L439 427L467 419M501 410L530 399" fill="none" stroke="#222" stroke-width="1.500" />
            <path d="M488 412V442M510 403V434M530 399V428" stroke="#8e9699" stroke-width="1" />
            <path d="M464 421h4l2 90h-5z" fill="#d5d6d7" /><path d="M536 432h4v49h-3z" fill="#bbb" />

            <path d="M293 406L345 393M372 450L424 433L470 420M437 483L540 443L640 405L770 360M470 440L532 474M540 402L627 423M736 344L808 359M690 378L740 390" class="gl" />

            <!-- selected downpipe -->
            <path d="M674 149h8L674 376h-7z" fill="#0bd21a" />
            <path d="M681 152L673 376" stroke="#0aa515" stroke-width="1" />
            <path d="M673 149h9M671 207h9M669 265h9M668 321h8M667 374h7" stroke="#0b2b0d" stroke-width="3" />

            <ellipse v-for="g in grounds" :key="g[0]" :cx="g[0]" :cy="g[1]" rx="4.500" ry="1.500" fill="#aaa" fill-opacity=".5" stroke="#555" stroke-width="1" />
            <path d="M717 493h4M725 493h4M723 487v4M723 495v4M722.500 493h1" stroke="#111" stroke-width="1.200" />
          </svg>
          <div class="vbar"><button aria-label="Scroll up">▴</button><i></i></div>
        </div>

        <div class="viewbar">
          <button v-for="(t, n) in viewTools" :key="n" :class="{ on: t.on }" :aria-label="t.icon"><svg class="ic" viewBox="0 0 16 16" v-html="icons[t.icon]" /></button>
          <button class="left" aria-label="Scroll left">◂</button>
          <div class="hbar"><i></i></div>
          <button class="left" aria-label="Scroll right">▸</button>
        </div>
      </div>
    </main>

    <div class="toolbar bottom">
      <template v-for="(group, g) in [bottomA, bottomB, bottomC]" :key="g">
        <div class="tools" :class="{ wide: g === 1 }">
          <template v-for="(t, n) in group" :key="n">
            <button v-if="t.kind === 'tool'" class="tool" :class="{ on: t.on }" :aria-label="t.icon"><svg class="ic" viewBox="0 0 16 16" v-html="icons[t.icon]" /></button>
            <i v-else :class="t.kind"></i>
          </template>
        </div>
      </template>
    </div>

    <footer class="status">
      <span>Shows or hides the Selections palette window.</span>
      <span class="disk"><svg class="ic" viewBox="0 0 16 16"><path d="M1 6h14v6H1z" fill="#bbb" stroke="#333" stroke-width="1.500" /><path d="M3 9h5" stroke="#333" stroke-width="1.500" /></svg>C: 41.6 GB</span>
      <span class="disk"><svg class="ic" viewBox="0 0 16 16"><circle cx="8" cy="8" r="6" fill="#ddd" stroke="#333" stroke-width="1.500" /><path d="M6 4v8M10 4v8" stroke="#333" stroke-width="1.500" /></svg>11.2 GB</span>
    </footer>

    <div class="menu window" role="menu">
      <template v-for="(m, n) in windowMenu" :key="n">
        <hr v-if="m.sep" />
        <button v-else role="menuitem" :class="{ hot: m.hot }">
          <span class="slot" :class="{ on: m.on }"><svg v-if="m.icon" class="ic" viewBox="0 0 16 16" v-html="icons[m.icon]" /></span>
          <span class="text">{{ m.text[0] }}<u>{{ m.text[1] }}</u>{{ m.text[2] }}</span>
          <kbd v-if="m.key">{{ m.key }}</kbd>
          <i v-if="m.sub">▸</i>
        </button>
      </template>
    </div>
    <div class="menu palette" role="menu">
      <template v-for="(m, n) in paletteMenu" :key="n">
        <hr v-if="m.sep" />
        <button v-else role="menuitem" :class="{ hot: m.hot }">
          <span class="slot" :class="{ on: m.on }"><svg class="ic" viewBox="0 0 16 16" v-html="icons[m.icon]" /></span>
          <span class="text">{{ m.text[0] }}<u>{{ m.text[1] }}</u>{{ m.text[2] }}</span>
        </button>
      </template>
      <svg class="pointer" viewBox="0 0 12 18"><path d="M1 1v13l3-3 2.500 6 2.500-1-2.500-6H11z" fill="#fff" stroke="#222" stroke-width="1.300" /></svg>
    </div>
  </div>
</template>

<style>
body { margin: 0; background: #fff; }
</style>

<style scoped>
.app { position: relative; box-sizing: border-box; min-height: 100vh; padding: 0 5px 0 1px; display: flex; flex-direction: column; font-family: Lato, "Open Sans", sans-serif; font-size: 7px; line-height: 9px; color: #2c2c2c; overflow: hidden; }
.app *, .app *::before { box-sizing: border-box; }
button, input { font: inherit; color: inherit; margin: 0; padding: 0; border: 0; background: none; border-radius: 0; min-width: 0; }
button { display: flex; align-items: center; justify-content: center; white-space: nowrap; }
h1, h2, p, ul { margin: 0; padding: 0; font-size: inherit; font-weight: normal; list-style: none; white-space: nowrap; }
i, em { font-style: normal; }
.ic { width: 10px; height: 10px; flex: none; display: block; }

.title { height: 12px; display: flex; align-items: center; gap: 1px; padding-left: 1px; border-bottom: 1px solid #dfe9ea; background: linear-gradient(90deg, #8fb0ad 0, #7fa39f 20%, #4f7f7a 30%, #3f726e 45%, #4a7f7c 60%, #2f5f62 66%, #55858a 75%, #2f5468 84%, #1f4056 100%); }
.title h1 { color: #10201f; }
.winbtns { margin-left: auto; display: flex; height: 9px; align-self: flex-start; border: 1px solid #c4d0d6; border-top: 0; border-radius: 0 0 3px 3px; overflow: hidden; }
.winbtns button { width: 15px; background: #5f7d8c; color: #fff; border-right: 1px solid #a7b7bf; }
.winbtns .close { width: 25px; background: linear-gradient(#d98a78, #b8321c); font-weight: bold; font-size: 9px; border: 0; }
.bar { width: 5px; height: 2px; background: currentColor; }
.sq { width: 4px; height: 4px; border: 1px solid currentColor; }

.menubar { height: 11px; display: flex; align-items: center; padding-left: 3px; background: linear-gradient(#fafbfd, #d4dbea); border-bottom: 1px solid #c3c6cd; }
.menubar > button { height: 10px; padding: 0 2px; border: 1px solid transparent; }
.menubar .open { border-color: #8a8f9c; background: #c9d0e0; border-radius: 1px; }
.childbtns { margin-left: auto; display: flex; gap: 3px; padding-right: 2px; color: #333; }
.childbtns button { width: 6px; font-weight: bold; }
.childbtns .bar { height: 1px; }

.toolbar { display: flex; align-items: center; background: #f0f0f0; }
.toolbar.top { height: 18px; border-bottom: 1px solid #c8c8c8; padding-left: 2px; }
.tools { display: flex; align-items: center; }
.tools.first { width: 388px; }
.tool { width: 13px; height: 15px; }
.tool.on { border: 1px solid #777; border-radius: 2px; background: #dcdce2; }
.caret { width: 10px; height: 15px; display: flex; align-items: center; justify-content: center; }
.caret::before { content: ""; border: 2px solid transparent; border-top-color: #333; border-bottom: 0; }
.caret.small, .space { width: 5px; }
.sep { width: 5px; height: 14px; display: flex; justify-content: center; }
.sep::before { content: ""; width: 1px; background: #a8a8a8; }
.toolbar.bottom { height: 18px; padding-left: 1px; border-top: 1px solid #d0d0d0; border-bottom: 1px solid #c4c4c4; }
.bottom .tool { width: 15px; }
.bottom .wide .tool { width: 16px; }

.status { height: 12px; display: flex; align-items: center; background: #f0eeee; padding: 0 30px 0 0; gap: 16px; }
.status > span:first-child { margin-right: auto; }
.disk { display: flex; align-items: center; gap: 2px; }

.main { flex: 1; display: flex; align-items: stretch; background: #f0f0f0; }
.palettes { width: 92px; flex: none; display: flex; flex-direction: column; border-right: 1px solid #cfcfcf; }
.palettes h2, .toolbox h2 { height: 8px; line-height: 8px; display: flex; justify-content: space-between; background: linear-gradient(#b4c9e2, #93aed0); color: #14203a; font-weight: bold; font-size: 6px; padding: 0 2px 0 1px; }
.palettes h2 span { display: flex; font-size: 8px; }
.palettes h2 .caret { height: 8px; }

.favorites { height: 153px; }
.favlist { display: flex; margin: 3px 2px 0 0; background: #fff; border: 1px solid #b5b5b5; height: 122px; }
.favscroll { flex: 1; min-width: 0; overflow: hidden; }
table { width: 100%; height: 124px; border-collapse: collapse; table-layout: fixed; font-size: 6px; line-height: 8px; }
th { background: #f4f4f4; text-align: left; font-weight: normal; font-size: 7px; padding: 0 1px; white-space: nowrap; }
th small { font-size: 5px; color: #888; }
td { padding: 0; white-space: nowrap; }
th:first-child { width: 25px; }
td:first-child { padding-left: 1px; }
td .ic { width: 8px; height: 8px; }
.vscroll { width: 9px; display: flex; flex-direction: column; align-items: center; background: #f1f1f1; font-size: 5px; line-height: 9px; }
.vscroll i { width: 8px; height: 9px; background: #e0e0e0; border: 1px solid #aaa; }
.vscroll b { font-size: 7px; }
.vscroll em { margin-top: auto; }
.hint { display: flex; align-items: center; gap: 1px; height: 11px; font-size: 6px; }

.navtabs { display: flex; justify-content: space-between; height: 13px; margin-top: 2px; padding-right: 1px; }
.navtabs button { width: 16px; height: 12px; }
.boxed { border: 1px solid #8a8a92; border-radius: 2px; background: #e6e6ea; }
.navtabs .on { background: #dcd8ec; }
.pubrow { display: flex; gap: 1px; height: 11px; margin-top: 1px; padding-right: 1px; }
.drop { flex: 1; justify-content: space-between; padding: 0 1px 0 8px; font-size: 6px; background: linear-gradient(#f6f6f6, #dedede); border: 1px solid #b5b5b5; border-radius: 2px; }
.mini { width: 10px; border: 1px solid #b0acc8; border-radius: 2px; }
.mini .ic { width: 8px; height: 8px; }
.tree { height: 109px; display: grid; grid-template-rows: repeat(11, 1fr); padding: 2px 0 10px 4px; margin: 2px 2px 0 0; background: #fff; border: 1px solid #c0c0c0; font-size: 6px; }
.tree li { display: flex; align-items: center; gap: 1px; min-height: 0; line-height: 8px; }
.tree li.child { padding-left: 10px; }
.tree i { width: 8px; height: 1px; border-top: 1px dotted #aaa; flex: none; }
.tree .knob { width: 5px; height: 5px; margin-right: 3px; border: 1px solid #a5a5a5; font-size: 5px; line-height: 3px; text-align: center; color: #555; }
.tree .ic { width: 9px; height: 9px; }
.foldrow { display: flex; justify-content: flex-end; height: 13px; margin-top: 5px; padding-right: 2px; }
.foldrow button { width: 12px; border: 1px solid #c0c0c0; }
.fold { width: 100%; height: 11px; justify-content: flex-start; gap: 6px; padding-left: 8px; font-size: 6px; }
.foldrow + .fold { margin-top: 1px; }
.pagebtns { display: flex; flex-direction: column; align-items: flex-end; gap: 4px; height: 72px; margin-top: 1px; padding: 4px 3px 0 0; border-top: 1px solid #d4d4d4; border-bottom: 1px solid #bdbdbd; }
.pagebtns button { width: 68px; height: 12px; border: 1px solid #cbcbcb; border-radius: 2px; color: #9a9a9a; font-size: 6px; background: #f4f4f4; }
.pubbtns { display: flex; gap: 7px; height: 18px; padding: 4px 0 2px 13px; }
.pubbtns button { width: 48px; border: 1px solid #888; border-radius: 2px; background: linear-gradient(#f6f6f6, #dcdcdc); }
.pubbtns .tiny { width: 15px; }
.quicklist { height: 69px; display: grid; grid-template-rows: repeat(7, 1fr); font-size: 6px; }
.qrow { display: flex; align-items: stretch; min-height: 0; gap: 1px; }
.qrow .ic { width: 7px; height: 7px; align-self: center; }
.qrow button { flex: 1; justify-content: space-between; padding: 0 1px; background: linear-gradient(#f8f8f8, #dadada); border: 1px solid #b2b2b2; border-top-color: #ddd; border-radius: 2px; line-height: 7px; white-space: pre; }
.qrow button:disabled { color: #a0a0a0; background: #f0f0f0; border-color: #d5d5d5; }

.toolbox { width: 21px; flex: none; margin-left: 3px; display: flex; flex-direction: column; align-items: center; border-left: 1px solid #aaa; border-right: 1px solid #aaa; }
.toolbox h2 { align-self: stretch; justify-content: flex-end; font-size: 8px; }
.toolbox p { height: 10px; font-size: 6px; line-height: 10px; align-self: stretch; padding-left: 1px; }
.toolbox p.tall { height: 13px; line-height: 13px; }
.toolbox button { width: 17px; height: 13px; flex: none; }
.toolbox .ic { width: 12px; height: 12px; }

.work { flex: 1; min-width: 0; display: flex; flex-direction: column; border-left: 1px solid #888; }
.infobox { height: 25px; display: flex; align-items: stretch; border-bottom: 1px solid #9a9a9a; background: #f0f0f0; padding: 1px 0; }
.infobox button:not(.boxed):not(.blue) { flex: none; }
.grip { width: 7px; background: linear-gradient(#bcd0e6, #6d93bd); font-size: 7px; line-height: 7px; text-align: center; }
.sel { width: 67px; padding-left: 1px; display: flex; flex-direction: column; }
.sel p { font-size: 6px; line-height: 8px; }
.sel div { display: flex; align-items: center; gap: 3px; padding-left: 4px; height: 13px; font-size: 5px; }
.sel .blue { width: 20px; height: 10px; border: 1px solid #3d6d9c; border-radius: 2px; background: linear-gradient(#c8e2f6, #6fa8d8); }
.object { width: 15px; border: 1px solid #999; background: #dcdce4; }
.object .ic { height: 14px; width: 14px; }
.ident { margin-left: 186px; width: 92px; border-right: 1px solid #b5b5b5; font-size: 6px; }
.ident label { display: flex; height: 10px; align-items: center; padding-left: 2px; }
.ident input:not([type]) { flex: 1; height: 9px; margin-left: 4px; padding-left: 3px; background: #fff; }
.ident .chk { font-weight: bold; gap: 2px; }
.chk input { appearance: none; width: 7px; height: 7px; border: 1px solid #aaa; background: #fff; }
.modes { width: 90px; display: flex; align-items: center; gap: 9px; padding-left: 5px; border-right: 1px solid #b5b5b5; }
.modes button { width: 13px; height: 14px; }
.modes .boxed { width: 23px; border-color: #666; }
.modes .boxed .ic { width: 13px; height: 12px; }
.modes .ic { width: 9px; height: 9px; }
.fps { width: 89px; display: flex; align-items: center; padding-left: 1px; border-right: 1px solid #b5b5b5; }
.fps button { width: 86px; height: 15px; border: 1px solid #8c8c8c; border-radius: 2px; background: linear-gradient(#f7f7f7, #d9d9d9); font-size: 6px; }
.heights { width: 90px; display: flex; align-items: center; justify-content: flex-end; gap: 5px; border-right: 1px solid #b5b5b5; font-size: 6px; }
.heights label { display: flex; width: 54px; height: 10px; align-items: center; justify-content: space-between; }
.heights input { width: 43px; height: 9px; padding-left: 1px; background: #fff; }
.dims { display: flex; align-items: center; gap: 3px; padding-left: 28px; padding-right: 1px; border-right: 1px solid #b5b5b5; font-size: 6px; }
.dims .big { width: 14px; height: 15px; }
.dims > div { display: flex; flex-direction: column; gap: 1px; }
.dims div input { width: 33px; height: 9px; padding-left: 2px; background: #fff; }
.dims .link { width: 8px; height: 20px; background: #79aede; border: 1px solid #3c74a8; }
.dims .pen { width: 19px; height: 14px; border: 1px solid #c6c6c6; border-radius: 2px; gap: 3px; }
.pen b { width: 3px; height: 8px; background: #aaa; }
.dims .zero { width: 44px; height: 9px; border: 1px solid #bbb; padding-left: 2px; background: #f2f2f2; color: #777; }

.view { flex: 1; min-height: 0; display: flex; background: #fff; }
.scene { flex: 1; min-width: 0; width: 100%; height: 485px; display: block; }
.gl { stroke: #5ea163; stroke-width: 1; fill: none; }
.vbar { width: 9px; flex: none; background: #f0f0f0; display: flex; flex-direction: column; }
.vbar button { height: 10px; font-size: 5px; }
.vbar i { flex: 1; margin: 0 1px 8px; border: 1px solid #c4c4c4; border-right: 2px solid #b0b0b0; background: #e6e6e6; }
.viewbar { height: 10px; display: flex; align-items: center; background: #f0f0f0; }
.viewbar button { width: 13px; height: 9px; border: 1px solid #bcc4ca; border-radius: 3px; background: #f7f7f7; }
.viewbar .on { background: #aed0ea; border-color: #4f86a8; }
.viewbar .ic { width: 8px; height: 8px; }
.viewbar .left { border: 0; background: none; font-size: 5px; }
.hbar { flex: 1; height: 8px; display: flex; align-items: center; justify-content: center; background: linear-gradient(#f0f0f0, #cfcfcf); border: 1px solid #bbb; }
.hbar i { width: 4px; height: 3px; background: #999; }

.menu { position: absolute; display: flex; flex-direction: column; background: #f1f1f1; border: 1px solid #a0a0a0; padding: 1px; }
.menu.window { left: 205px; top: 23px; width: 184px; height: 130px; }
.menu.palette { left: 387px; top: 94px; width: 114px; height: 328px; box-shadow: 1px 1px 2px #0005; }
.menu button { flex: 1; min-height: 0; justify-content: flex-start; border: 1px solid transparent; padding-right: 7px; }
.menu .hot { background: #9fcdf7; border-color: #6a9fd0; }
.menu hr { flex: none; width: auto; height: 1px; margin: 1px 2px 1px 15px; border: 0; background: #c2c2c2; }
.slot { width: 11px; height: 12px; flex: none; display: flex; align-items: center; justify-content: center; }
.slot.on { background: #b4d6f5; outline: 1px solid #7fb0dc; }
.text { margin-left: 4px; }
.menu u { text-underline-offset: 1px; }
.menu kbd { margin-left: auto; font: inherit; }
.menu button > i { margin-left: auto; margin-right: -6px; font-size: 6px; }
.pointer { position: absolute; left: 95px; top: 275px; width: 8px; height: 12px; }
</style>
